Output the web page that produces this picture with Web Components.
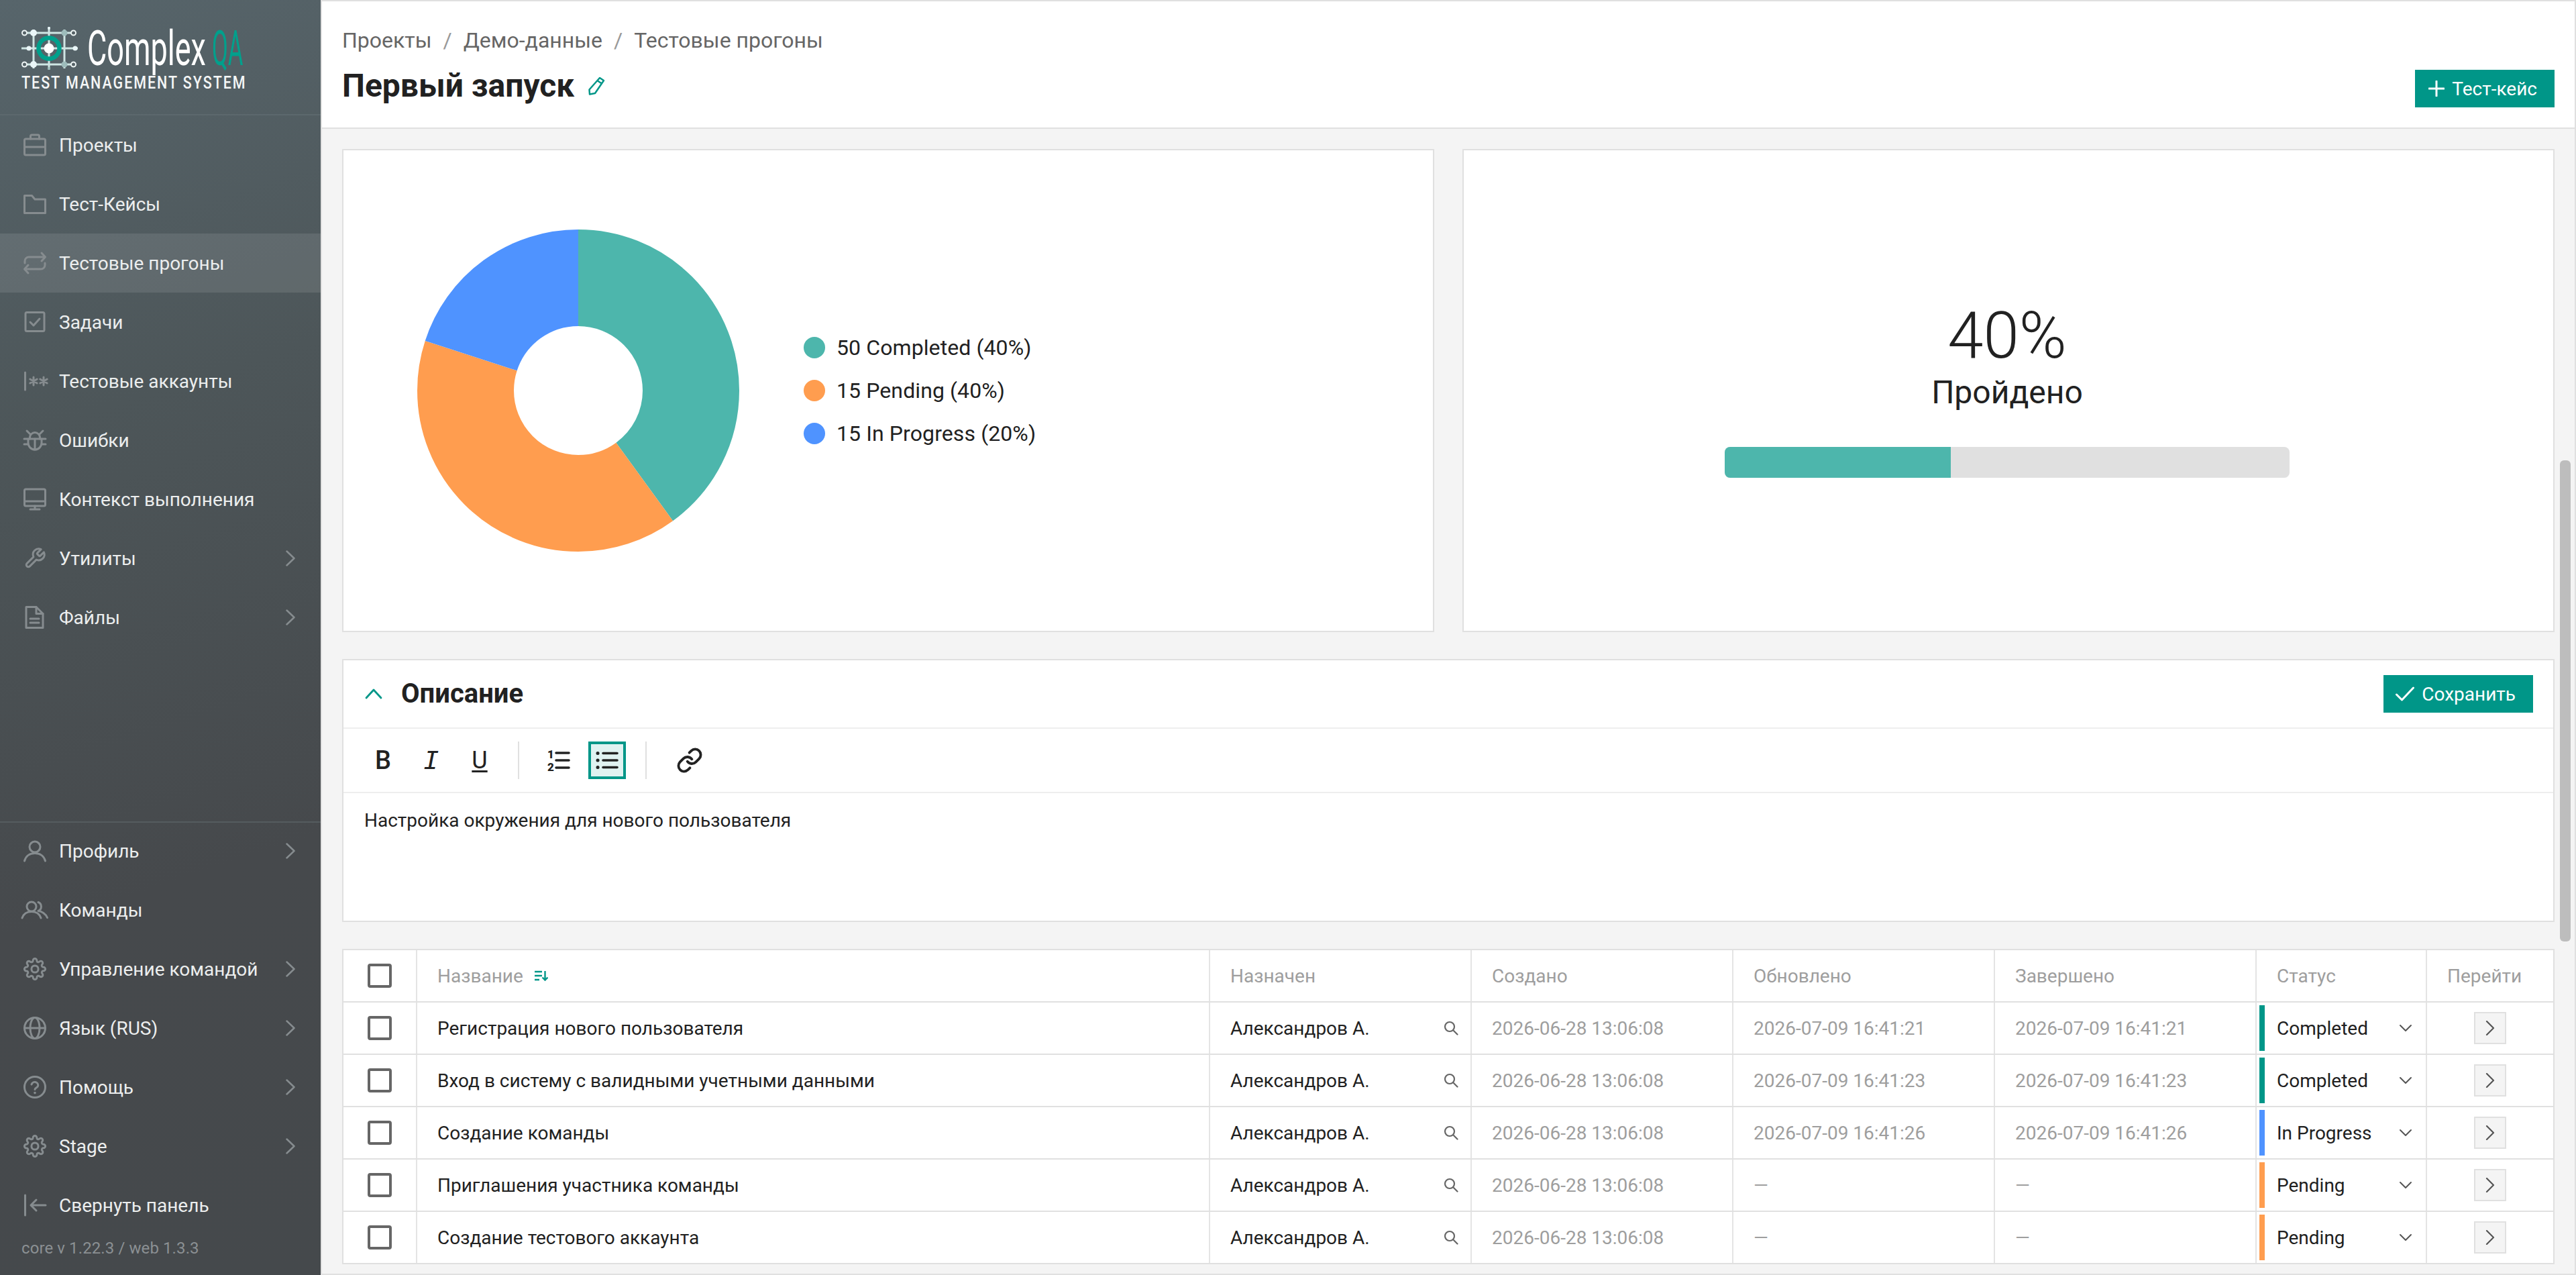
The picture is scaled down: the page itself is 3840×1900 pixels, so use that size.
<!DOCTYPE html>
<html lang="ru">
<head>
<meta charset="utf-8">
<title>Complex QA</title>
<style>
  html, body { margin: 0; padding: 0; height: 1900px; overflow: hidden; }
  body { font-family: Roboto, "Noto Sans", sans-serif; color: #212121; background: #f4f4f4; }
</style>
</head>
<body>
<qa-app>
  <qa-sidebar slot="sidebar">
    <qa-nav-item slot="top" icon="briefcase">Проекты</qa-nav-item>
    <qa-nav-item slot="top" icon="folder">Тест-Кейсы</qa-nav-item>
    <qa-nav-item slot="top" icon="repeat" active>Тестовые прогоны</qa-nav-item>
    <qa-nav-item slot="top" icon="task">Задачи</qa-nav-item>
    <qa-nav-item slot="top" icon="secret">Тестовые аккаунты</qa-nav-item>
    <qa-nav-item slot="top" icon="bug">Ошибки</qa-nav-item>
    <qa-nav-item slot="top" icon="monitor">Контекст выполнения</qa-nav-item>
    <qa-nav-item slot="top" icon="tool" arrow>Утилиты</qa-nav-item>
    <qa-nav-item slot="top" icon="file" arrow>Файлы</qa-nav-item>
    <qa-nav-item slot="bottom" icon="user" arrow>Профиль</qa-nav-item>
    <qa-nav-item slot="bottom" icon="users">Команды</qa-nav-item>
    <qa-nav-item slot="bottom" icon="gear" arrow>Управление командой</qa-nav-item>
    <qa-nav-item slot="bottom" icon="globe" arrow>Язык (RUS)</qa-nav-item>
    <qa-nav-item slot="bottom" icon="help" arrow>Помощь</qa-nav-item>
    <qa-nav-item slot="bottom" icon="gear" arrow>Stage</qa-nav-item>
    <qa-nav-item slot="bottom" icon="collapse">Свернуть панель</qa-nav-item>
  </qa-sidebar>

  <qa-page-header slot="header" title-text="Первый запуск">
    <span slot="crumb">Проекты</span>
    <span slot="crumb">Демо-данные</span>
    <span slot="crumb">Тестовые прогоны</span>
  </qa-page-header>

  <qa-donut-card></qa-donut-card>
  <qa-progress-card slot="charts"></qa-progress-card>
  <qa-description slot="wide">Настройка окружения для нового пользователя</qa-description>
  <qa-table slot="wide">
    <qa-test-head></qa-test-head>
    <qa-test-row assignee="Александров А." created="2026-06-28 13:06:08" updated="2026-07-09 16:41:21" finished="2026-07-09 16:41:21" status="Completed">Регистрация нового пользователя</qa-test-row>
    <qa-test-row assignee="Александров А." created="2026-06-28 13:06:08" updated="2026-07-09 16:41:23" finished="2026-07-09 16:41:23" status="Completed">Вход в систему с валидными учетными данными</qa-test-row>
    <qa-test-row assignee="Александров А." created="2026-06-28 13:06:08" updated="2026-07-09 16:41:26" finished="2026-07-09 16:41:26" status="In Progress">Создание команды</qa-test-row>
    <qa-test-row assignee="Александров А." created="2026-06-28 13:06:08" updated="—" finished="—" status="Pending">Приглашения участника команды</qa-test-row>
    <qa-test-row assignee="Александров А." created="2026-06-28 13:06:08" updated="—" finished="—" status="Pending">Создание тестового аккаунта</qa-test-row>
  </qa-table>
</qa-app>

<script>
const TEAL = '#009688';

const GEAR = 'M19.4 15a1.65 1.65 0 0 0 .33 1.82l.06.06a2 2 0 0 1 0 2.83 2 2 0 0 1-2.83 0l-.06-.06a1.65 1.65 0 0 0-1.82-.33 1.65 1.65 0 0 0-1 1.51V21a2 2 0 0 1-2 2 2 2 0 0 1-2-2v-.09A1.65 1.65 0 0 0 9 19.4a1.65 1.65 0 0 0-1.82.33l-.06.06a2 2 0 0 1-2.83 0 2 2 0 0 1 0-2.83l.06-.06a1.65 1.65 0 0 0 .33-1.82 1.65 1.65 0 0 0-1.51-1H3a2 2 0 0 1-2-2 2 2 0 0 1 2-2h.09A1.65 1.65 0 0 0 4.6 9a1.65 1.65 0 0 0-.33-1.82l-.06-.06a2 2 0 0 1 0-2.83 2 2 0 0 1 2.83 0l.06.06a1.65 1.65 0 0 0 1.82.33H9a1.65 1.65 0 0 0 1-1.51V3a2 2 0 0 1 2-2 2 2 0 0 1 2 2v.09a1.65 1.65 0 0 0 1 1.51 1.65 1.65 0 0 0 1.82-.33l.06-.06a2 2 0 0 1 2.83 0 2 2 0 0 1 0 2.83l-.06.06a1.65 1.65 0 0 0-.33 1.82V9a1.65 1.65 0 0 0 1.51 1H21a2 2 0 0 1 2 2 2 2 0 0 1-2 2h-.09a1.65 1.65 0 0 0-1.51 1z';

// all sidebar icons sit in a 34x34 box
const ICONS = {
  briefcase: '<rect x="1.5" y="8" width="31" height="24" rx="2"/><path d="M10.5 8V4a2 2 0 0 1 2-2h9a2 2 0 0 1 2 2v4M1.5 20h31"/>',
  folder: '<path d="M1.5 30.5V4.500h11l4.500 5.500h15.500v20.500z" stroke-linejoin="round"/>',
  repeat: '<path d="M2 17v-3a6 6 0 0 1 6-6h24M27 2l5.500 6-5.500 6M32 17v3a6 6 0 0 1-6 6H2M7 20l-5.500 6 5.500 6"/>',
  task: '<rect x="3" y="2.500" width="28" height="28" rx="2"/><path d="M10 17l5 5 9-10"/>',
  secret: '<path d="M2.500 4v26"/><path stroke-width="3" d="M15 11v12M9.800 14l10.400 6M9.800 20l10.400-6M30 11v12M24.800 14l10.400 6M24.800 20l10.400-6"/>',
  bug: '<path d="M7 15h20v6a10 10 0 0 1-20 0z" /><path d="M9.500 15v-2a7.500 7.500 0 0 1 15 0v2M17 15v16M5 3l5 5M29 3l-5 5M1 15h6M33 15h-6M1 23h6M33 23h-6"/>',
  monitor: '<rect x="1.500" y="2" width="31" height="25" rx="2"/><path d="M1.500 20h31M17 27v4M10 32h14"/>',
  tool: '<g transform="scale(1.4167)" stroke-width="2.100"><path d="M14.700 6.300a1 1 0 0 0 0 1.400l1.600 1.600a1 1 0 0 0 1.400 0l3.770-3.770a6 6 0 0 1-7.940 7.940l-6.910 6.910a2.120 2.120 0 0 1-3-3l6.910-6.910a6 6 0 0 1 7.940-7.940l-3.760 3.760z"/></g>',
  file: '<path d="M4 1.500h15l10 10v21H4z" stroke-linejoin="round"/><path d="M19 1.500v10h10M10 19h13M10 25h13"/>',
  user: '<circle cx="17" cy="11" r="8"/><path d="M1.500 32c2-7.500 8-11.500 15.500-11.500S30.500 24.500 32.500 32"/>',
  users: '<circle cx="12" cy="12" r="7"/><path d="M-2 29c2-6 7-9.500 14-9.500S24 23 26 29M22 5.500a7 7 0 0 1 0 13c5 .5 11 4 13.500 10"/>',
  gear: '<g transform="scale(1.4167)" stroke-width="2.100"><circle cx="12" cy="12" r="3.600"/><path d="' + GEAR + '"/></g>',
  globe: '<circle cx="17" cy="17" r="15.500"/><ellipse cx="17" cy="17" rx="7" ry="15.500"/><path d="M1.500 17h31"/>',
  help: '<circle cx="17" cy="17" r="15.500"/><path d="M12 13a5 5 0 0 1 9.800 1.500c0 3.300-4.800 3.600-4.800 6"/><path d="M17 25.500v.1" stroke-width="3.600"/>',
  collapse: '<path d="M2.500 2v30M33 17H11M19 9l-8 8 8 8"/>'
};

class QaIcon extends HTMLElement {
  constructor() {
    super();
    this.shadowDOM = this.attachShadow({ mode: 'open' });
  }
  connectedCallback() {
    const name = this.getAttribute('name');
    this.shadowDOM.innerHTML = `
      <style>
        :host { display: block; width: 34px; height: 34px; }
        svg { display: block; overflow: visible; fill: none; stroke: currentColor; stroke-width: 3; stroke-linecap: round; stroke-linejoin: round; }
      </style>
      <svg width="34" height="34" viewBox="0 0 34 34">${ICONS[name] || ''}</svg>`;
  }
}
customElements.define('qa-icon', QaIcon);

class QaApp extends HTMLElement {
  constructor() {
    super();
    this.shadowDOM = this.attachShadow({ mode: 'open' });
  }
  connectedCallback() {
    this.shadowDOM.innerHTML = `
      <style>
        :host { display: flex; height: 1900px; }
        .main { flex: 1; min-width: 0; display: flex; flex-direction: column; border: 2px solid #e0e0e0; background: #f4f4f4; }
        .body { flex: 1; min-height: 0; display: flex; }
        .content { flex: 1; min-width: 0; box-sizing: border-box; padding: 30px 8px 0 30px; display: flex; flex-direction: column; gap: 40px; }
        .charts { display: grid; grid-template-columns: 1fr 1fr; gap: 42px; }
        .track { width: 16px; margin-right: 6px; padding-top: 494px; flex: none; }
        .thumb { height: 717px; background: #bdbdbd; border-radius: 6px; }
      </style>
      <slot name="sidebar"></slot>
      <div class="main">
        <slot name="header"></slot>
        <div class="body">
          <div class="content">
            <div class="charts"><slot></slot><slot name="charts"></slot></div>
            <slot name="wide"></slot>
          </div>
          <div class="track"><div class="thumb"></div></div>
        </div>
      </div>`;
  }
}
customElements.define('qa-app', QaApp);

class QaSidebar extends HTMLElement {
  constructor() {
    super();
    this.shadowDOM = this.attachShadow({ mode: 'open' });
  }
  connectedCallback() {
    this.shadowDOM.innerHTML = `
      <style>
        :host { display: flex; flex-direction: column; width: 478px; flex: none; height: 1900px; color: #eceeee;
          background: linear-gradient(162deg, #57656b 0%, #4d5659 32%, #46494c 68%, #45494c 100%); }
        .logo { box-sizing: border-box; border-bottom: 2px solid #5c686d; padding: 40px 0 0 32px; height: 172px; overflow: hidden; }
        .top-line { display: flex; height: 68px; }
        .mark { display: block; flex: none; }
        .word { font-size: 72px; line-height: 66px; font-weight: 400; color: #fff; white-space: nowrap; transform-origin: 0 0; display: inline-block; }
        .word.a { transform: scaleX(.625); width: 168px; margin-left: 14px; }
        .word.b { transform: scaleX(.48); color: #00a08c; width: 46px; margin-left: 18px; }
        .sub { font-size: 26px; line-height: 30px; font-weight: 500; letter-spacing: 2.4px; color: #f4f6f6; white-space: nowrap; transform: scaleX(.825); transform-origin: 0 0; }
        .spacer { flex: 1; }
        .bottom { border-top: 2px solid #555c5f; }
        .rows { margin-top: -2px; }
        .ver { height: 60px; box-sizing: border-box; padding: 4px 0 0 32px; font-size: 24px; line-height: 32px; letter-spacing: .1px; color: #8b9093; }
      </style>
      <div class="logo">
        <div class="top-line">
          <svg class="mark" width="84" height="66" viewBox="32 40 84 66" fill="none">
            <g stroke="#cfe6e4" stroke-width="3">
              <path d="M36 49h74M32 72h84M36 96h74"/>
              <path d="M50 44v58M73 40v64M96 44v58"/>
            </g>
            <circle cx="73" cy="72" r="15.500" stroke="#00a08c" stroke-width="6.500"/>
            <circle cx="73" cy="72" r="7.500" fill="#fff"/>
            <g fill="#eaf6f8">
              <circle cx="50" cy="49" r="5"/><circle cx="50" cy="96" r="5"/>
              <circle cx="43" cy="72" r="3.500"/><circle cx="112" cy="72" r="3.500"/><circle cx="73" cy="42" r="2"/>
            </g>
            <circle cx="96" cy="49" r="4.500" fill="#9dbcbb"/><circle cx="96" cy="96" r="4.500" fill="#9dbcbb"/>
            <circle cx="73" cy="102" r="2" fill="#9dbcbb"/>
            <g stroke="#eef5f5" stroke-width="2" fill="#556166">
              <circle cx="36.500" cy="49" r="3.500"/><circle cx="109.500" cy="49" r="3.500"/>
              <circle cx="36.500" cy="96" r="3.500"/><circle cx="109.500" cy="96" r="3.500"/>
            </g>
          </svg>
          <span class="word a">Complex</span><span class="word b">QA</span>
        </div>
        <div class="sub">TEST MANAGEMENT SYSTEM</div>
      </div>
      <slot name="top"></slot>
      <div class="spacer"></div>
      <div class="bottom"><div class="rows"><slot name="bottom"></slot></div></div>
      <div class="ver">core v 1.22.3 / web 1.3.3</div>`;
  }
}
customElements.define('qa-sidebar', QaSidebar);

class QaNavItem extends HTMLElement {
  constructor() {
    super();
    this.shadowDOM = this.attachShadow({ mode: 'open' });
  }
  connectedCallback() {
    const arrow = this.hasAttribute('arrow')
      ? '<svg class="arrow" width="14" height="24" viewBox="0 0 14 24" fill="none" stroke="currentColor" stroke-width="2.500" stroke-linecap="round" stroke-linejoin="round"><path d="M1.500 1.500l11 10.500-11 10.500"/></svg>'
      : '';
    this.shadowDOM.innerHTML = `
      <style>
        :host { display: flex; align-items: center; height: 88px; padding: 0 38px 0 35px; box-sizing: border-box; font-size: 28px; color: #eceeee; }
        :host([active]) { background: rgba(255, 255, 255, .1); }
        qa-icon { color: #868c8f; flex: none; }
        .label { margin-left: 19px; flex: 1; white-space: nowrap; }
        .arrow { color: #868c8f; display: block; }
      </style>
      <qa-icon name="${this.getAttribute('icon')}"></qa-icon>
      <span class="label"><slot></slot></span>${arrow}`;
  }
}
customElements.define('qa-nav-item', QaNavItem);

class QaButton extends HTMLElement {
  constructor() {
    super();
    this.shadowDOM = this.attachShadow({ mode: 'open' });
  }
  connectedCallback() {
    const icon = this.getAttribute('icon') === 'check'
      ? '<svg width="28" height="24" viewBox="0 0 28 24"><path d="M1.500 13l8 8L26.500 3"/></svg>'
      : '<svg width="24" height="24" viewBox="0 0 24 24"><path d="M12 1v22M1 12h22"/></svg>';
    this.shadowDOM.innerHTML = `
      <style>
        :host { display: inline-flex; align-items: center; gap: 11px; height: 56px; padding: 0 26px 0 20px; box-sizing: border-box; background: ${TEAL}; color: #fff; font-size: 28px; white-space: nowrap; }
        :host([icon=check]) { padding-left: 18px; }
        svg { display: block; fill: none; stroke: #fff; stroke-width: 3; stroke-linecap: round; stroke-linejoin: round; }
      </style>
      ${icon}<slot></slot>`;
  }
}
customElements.define('qa-button', QaButton);

class QaPageHeader extends HTMLElement {
  constructor() {
    super();
    this.shadowDOM = this.attachShadow({ mode: 'open' });
  }
  connectedCallback() {
    const crumbs = [...this.querySelectorAll('[slot=crumb]')];
    crumbs.forEach((c, i) => {
      c.style.color = '#666';
      if (i > 0) {
        const sep = document.createElement('span');
        sep.slot = 'crumb';
        sep.textContent = '/';
        sep.style.cssText = 'color:#999;margin:0 17px;';
        c.before(sep);
      }
    });
    this.shadowDOM.innerHTML = `
      <style>
        :host { display: block; height: 190px; box-sizing: border-box; background: #fff; border-bottom: 2px solid #e0e0e0; padding: 36px 30px 0 30px; flex: none; }
        .crumbs { font-size: 32px; line-height: 44px; white-space: nowrap; }
        .row { display: flex; align-items: center; justify-content: space-between; margin-top: 22px; height: 56px; }
        .title { display: flex; align-items: center; gap: 20px; margin-top: -8px; }
        h1 { margin: 0; font-size: 48px; line-height: 56px; font-weight: 700; color: #212121; }
        svg { display: block; fill: none; stroke: ${TEAL}; stroke-width: 2.500; stroke-linejoin: round; }
      </style>
      <div class="crumbs"><slot name="crumb"></slot></div>
      <div class="row">
        <div class="title">
          <h1>${this.getAttribute('title-text')}</h1>
          <svg width="26" height="28" viewBox="0 0 26 28"><path d="M18 2l6 4-13 19-8 1.500-.500-7zM15 6.500l6 4"/></svg>
        </div>
        <qa-button>Тест-кейс</qa-button>
      </div>`;
  }
}
customElements.define('qa-page-header', QaPageHeader);

class QaDonutCard extends HTMLElement {
  constructor() {
    super();
    this.shadowDOM = this.attachShadow({ mode: 'open' });
  }
  connectedCallback() {
    const legend = [
      ['#4db6ac', '50 Completed (40%)'],
      ['#ff9d4f', '15 Pending (40%)'],
      ['#4f93ff', '15 In Progress (20%)']
    ];
    this.shadowDOM.innerHTML = `
      <style>
        :host { display: flex; align-items: center; height: 720px; box-sizing: border-box; background: #fff; border: 2px solid #e0e0e0; padding-left: 110px; gap: 96px; }
        svg { display: block; flex: none; transform: rotate(-90deg); }
        circle { fill: none; stroke-width: 144; }
        .row { display: flex; align-items: center; height: 64px; gap: 17px; font-size: 32px; letter-spacing: .1px; white-space: nowrap; color: #212121; }
        .dot { width: 32px; height: 32px; border-radius: 50%; flex: none; }
      </style>
      <svg width="480" height="480" viewBox="0 0 480 480">
        <circle cx="240" cy="240" r="168" pathLength="100" stroke="#4db6ac" stroke-dasharray="40 60"/>
        <circle cx="240" cy="240" r="168" pathLength="100" stroke="#ff9d4f" stroke-dasharray="40 60" stroke-dashoffset="-40"/>
        <circle cx="240" cy="240" r="168" pathLength="100" stroke="#4f93ff" stroke-dasharray="20 80" stroke-dashoffset="-80"/>
      </svg>
      <div>${legend.map(([c, t]) => `<div class="row"><span class="dot" style="background:${c}"></span><span>${t}</span></div>`).join('')}</div>`;
  }
}
customElements.define('qa-donut-card', QaDonutCard);

class QaProgressCard extends HTMLElement {
  constructor() {
    super();
    this.shadowDOM = this.attachShadow({ mode: 'open' });
  }
  connectedCallback() {
    this.shadowDOM.innerHTML = `
      <style>
        :host { display: flex; flex-direction: column; align-items: center; justify-content: center; height: 720px; box-sizing: border-box; background: #fff; border: 2px solid #e0e0e0; padding-right: 4px; color: #212121; }
        .value { font-size: 96px; line-height: 96px; font-weight: 300; }
        .label { font-size: 48px; line-height: 60px; margin-top: 7px; }
        .bar { width: 842px; height: 46px; margin-top: 51px; background: #e0e0e0; border-radius: 8px; overflow: hidden; }
        .fill { width: 40%; height: 100%; background: #4db6ac; }
      </style>
      <div class="value">40%</div>
      <div class="label">Пройдено</div>
      <div class="bar"><div class="fill"></div></div>`;
  }
}
customElements.define('qa-progress-card', QaProgressCard);

class QaDescription extends HTMLElement {
  constructor() {
    super();
    this.shadowDOM = this.attachShadow({ mode: 'open' });
  }
  connectedCallback() {
    this.shadowDOM.innerHTML = `
      <style>
        :host { display: block; height: 392px; box-sizing: border-box; background: #fff; border: 2px solid #e0e0e0; color: #212121; }
        .head { height: 102px; box-sizing: border-box; border-bottom: 2px solid #eee; display: flex; align-items: center; padding: 0 30px 0 32px; }
        .chev { display: block; fill: none; stroke: ${TEAL}; stroke-width: 2.800; stroke-linecap: round; stroke-linejoin: round; }
        h2 { margin: 0 0 0 28px; flex: 1; font-size: 40px; line-height: 48px; font-weight: 700; }
        .tools { height: 96px; box-sizing: border-box; border-bottom: 2px solid #eee; display: flex; align-items: center; padding: 0 0 0 31px; gap: 16px; }
        .btn { width: 56px; height: 56px; box-sizing: border-box; display: flex; align-items: center; justify-content: center; font-size: 38px; line-height: 1; color: #222; }
        .btn.on { background: #e0f2f1; border: 4px solid ${TEAL}; }
        .b { font-weight: 500; }
        .i { font-family: "DejaVu Sans Mono", monospace; font-style: italic; font-size: 38px; }
        .u { text-decoration: underline; text-decoration-thickness: 3px; text-underline-offset: 3px; font-size: 36px; font-weight: 400; }
        .sep { width: 2px; height: 56px; background: #e0e0e0; margin: 0 15px 0 13px; }
        .sep.last { margin-right: 20px; }
        svg.t { display: block; overflow: visible; fill: none; stroke: #222; stroke-linecap: round; stroke-linejoin: round; }
        svg text { font-family: Roboto, sans-serif; font-weight: 900; font-size: 17px; fill: #222; stroke: none; }
        .text { padding: 24px 31px; font-size: 28px; line-height: 34px; }
      </style>
      <div class="head">
        <svg class="chev" width="26" height="16" viewBox="0 0 26 16"><path d="M2 14L13 2l11 12"/></svg>
        <h2>Описание</h2>
        <qa-button icon="check">Сохранить</qa-button>
      </div>
      <div class="tools">
        <div class="btn b">B</div>
        <div class="btn i">I</div>
        <div class="btn u">U</div>
        <div class="sep"></div>
        <div class="btn">
          <svg class="t" width="32" height="34" viewBox="0 0 32 34" stroke-width="3.600"><text x="-1" y="14">1</text><text x="-1" y="33">2</text><path d="M12 6h19M12 17h19M12 28h19"/></svg>
        </div>
        <div class="btn on">
          <svg class="t" width="32" height="30" viewBox="0 0 32 30" stroke-width="3.600"><path d="M10 4.500h21M10 15h21M10 25.500h21"/><path stroke-width="5" d="M2 4.500h.1M2 15h.1M2 25.500h.1"/></svg>
        </div>
        <div class="sep last"></div>
        <div class="btn">
          <svg class="t" width="40" height="40" viewBox="0 0 24 24" stroke-width="2.300"><path d="M10 13a5 5 0 0 0 7.540.540l3-3a5 5 0 0 0-7.070-7.070l-1.720 1.710"/><path d="M14 11a5 5 0 0 0-7.540-.540l-3 3a5 5 0 0 0 7.070 7.070l1.710-1.710"/></svg>
        </div>
      </div>
      <div class="text"><slot></slot></div>`;
  }
}
customElements.define('qa-description', QaDescription);

class QaTable extends HTMLElement {
  constructor() {
    super();
    this.shadowDOM = this.attachShadow({ mode: 'open' });
  }
  connectedCallback() {
    this.shadowDOM.innerHTML = `
      <style>
        :host { display: block; background: #fff; border: 2px solid #e0e0e0; border-bottom: 0; }
      </style>
      <slot></slot>`;
  }
}
customElements.define('qa-table', QaTable);

// shared by header and rows so the columns line up
const ROW_CSS = `
  :host { display: grid; grid-template-columns: 110px 1182px 390px 390px 390px 390px 254px 188px; height: 78px; box-sizing: border-box; border-bottom: 2px solid #e0e0e0; font-size: 28px; color: #212121; }
  .c { display: flex; align-items: center; min-width: 0; box-sizing: border-box; padding-left: 30px; border-right: 2px solid #e4e4e4; white-space: nowrap; }
  .c:last-child { border-right: 0; }
  .box { width: 36px; height: 36px; box-sizing: border-box; border: 4px solid #666; border-radius: 4px; background: #fff; }
  .check { padding-left: 0; justify-content: center; }
  .muted { color: #9e9e9e; }
`;

class QaTestHead extends HTMLElement {
  constructor() {
    super();
    this.shadowDOM = this.attachShadow({ mode: 'open' });
  }
  connectedCallback() {
    this.shadowDOM.innerHTML = `
      <style>${ROW_CSS}
        .sort { display: block; margin-left: 17px; fill: none; stroke: ${TEAL}; stroke-width: 2.400; }
      </style>
      <div class="c check"><div class="box"></div></div>
      <div class="c muted">Название
        <svg class="sort" width="20" height="16" viewBox="0 0 20 16"><path d="M0 2h11M0 8h11M0 14h7M15.500 1v13M11.500 10.500l4 4 4-4"/></svg>
      </div>
      <div class="c muted">Назначен</div>
      <div class="c muted">Создано</div>
      <div class="c muted">Обновлено</div>
      <div class="c muted">Завершено</div>
      <div class="c muted">Статус</div>
      <div class="c muted">Перейти</div>`;
  }
}
customElements.define('qa-test-head', QaTestHead);

const STATUS_COLORS = { 'Completed': TEAL, 'In Progress': '#4f93ff', 'Pending': '#ff9d4f' };

class QaTestRow extends HTMLElement {
  constructor() {
    super();
    this.shadowDOM = this.attachShadow({ mode: 'open' });
  }
  connectedCallback() {
    const attr = n => this.getAttribute(n);
    const status = attr('status');
    this.shadowDOM.innerHTML = `
      <style>${ROW_CSS}
        .who { justify-content: space-between; padding-right: 18px; }
        .who svg { display: block; fill: none; stroke: #666; stroke-width: 2.200; stroke-linecap: round; }
        .status { padding-left: 4px; padding-right: 20px; }
        .mark { width: 8px; height: 68px; flex: none; margin-right: 18px; }
        .status .name { flex: 1; }
        .status svg { display: block; fill: none; stroke: #555; stroke-width: 2; stroke-linecap: round; stroke-linejoin: round; }
        .go-cell { padding-left: 0; justify-content: center; }
        .go { width: 48px; height: 48px; box-sizing: border-box; background: #f4f4f4; border: 2px solid #e0e0e0; display: flex; align-items: center; justify-content: center; }
        .go svg { display: block; fill: none; stroke: #555; stroke-width: 2.200; stroke-linecap: round; stroke-linejoin: round; }
      </style>
      <div class="c check"><div class="box"></div></div>
      <div class="c"><slot></slot></div>
      <div class="c who"><span>${attr('assignee')}</span>
        <svg width="22" height="22" viewBox="0 0 22 22"><circle cx="9" cy="9" r="7"/><path d="M14.500 14.500l6 6"/></svg>
      </div>
      <div class="c muted">${attr('created')}</div>
      <div class="c muted">${attr('updated')}</div>
      <div class="c muted">${attr('finished')}</div>
      <div class="c status"><span class="mark" style="background:${STATUS_COLORS[status]}"></span><span class="name">${status}</span>
        <svg width="20" height="12" viewBox="0 0 20 12"><path d="M2 2l8 8 8-8"/></svg>
      </div>
      <div class="c go-cell"><div class="go">
        <svg width="14" height="22" viewBox="0 0 14 22"><path d="M2 1l10 10L2 21"/></svg>
      </div></div>`;
  }
}
customElements.define('qa-test-row', QaTestRow);
</script>
</body>
</html>
